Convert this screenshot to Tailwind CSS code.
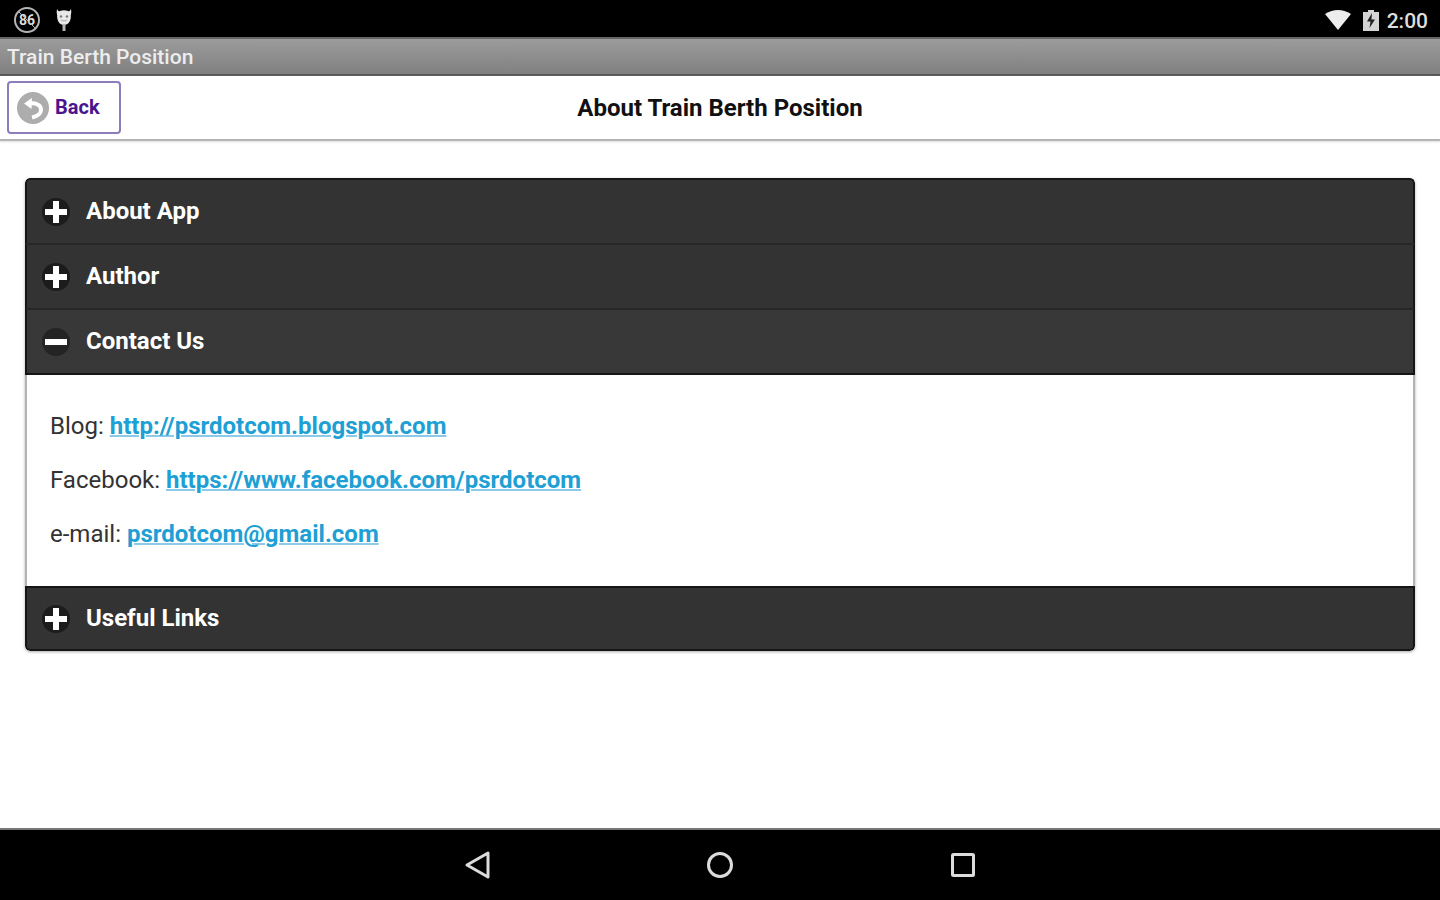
<!DOCTYPE html>
<html lang="en">

<head>
  <meta charset="utf-8">
  <meta name="viewport" content="width=device-width, initial-scale=1">
  <title>Train Berth Position</title>
  <script src="https://cdn.jsdelivr.net/npm/@tailwindcss/browser@4"></script>
</head>

<body class="flex flex-col min-h-screen bg-white font-[Roboto,sans-serif] text-black">
  <!-- status bar -->
  <div class="flex items-center justify-between h-[37px] shrink-0 bg-black px-3 text-[#dedede]">
    <div class="flex items-center gap-3 pt-1">
      <svg class="w-[30px] h-[30px]" viewBox="0 0 30 30">
        <circle cx="15" cy="14" r="12" fill="none" stroke="#b4b4b4" stroke-width="2" />
        <text x="15" y="19" text-anchor="middle" font-size="14" font-weight="700" fill="#dcdcdc">86</text>
        <path d="M7 6l16 16" stroke="#b4b4b4" stroke-width="1" />
      </svg>
      <svg class="w-5 h-[26px]" viewBox="0 0 20 26">
        <path d="M3 1c1 2 2 2.500 3 2q4-1.500 8 0c1 .5 2 0 3-2c.5 3 .2 4-.2 6c.5 6-2.500 10-6.800 10S2.700 13 3.200 7C2.800 5 2.500 4 3 1z" fill="#e8e8e8" />
        <path d="M10 16v7" stroke="#b4b4b4" stroke-width="3" />
        <circle cx="7" cy="8.500" r="1.200" fill="#777" />
        <circle cx="13" cy="8.500" r="1.200" fill="#777" />
        <path d="M7 12q3 2 6 0" stroke="#aaa" fill="none" />
      </svg>
    </div>
    <div class="flex items-center pt-1">
      <svg class="w-[26px] h-[22px] mr-3" viewBox="0 0 26 22" fill="#ededed">
        <path d="M0 4Q13-4 26 4L13 20z" />
      </svg>
      <svg class="w-4 h-[22px] mr-2" viewBox="0 0 16 22">
        <path d="M0 2h5V0h6v2h5v19H0z" fill="#d4d4d4" />
        <path d="M9 3L4 11.500h3.500L6.500 18L12 9.500H8.500z" fill="#222" />
      </svg>
      <span class="text-[21px] leading-6 font-medium">2:00</span>
    </div>
  </div>

  <!-- window title -->
  <div class="flex items-center h-[39px] shrink-0 px-[7px] border-t-2 border-b-2 border-t-[#666] border-b-[#555] bg-linear-to-b from-[#9c9c9c] to-[#808080]">
    <span class="text-[21px] leading-6 font-medium text-[#ededed]">Train Berth Position</span>
  </div>

  <!-- page header -->
  <header class="grid grid-cols-[1fr_auto_1fr] items-center h-[65px] shrink-0 px-[7px] border-b-2 border-[#b4b4b4] shadow-[0_1px_2px_#ddd]">
    <a href="#" class="flex items-center gap-[6px] justify-self-start w-[114px] h-[53px] pl-2 rounded-[4px] border-2 border-[#8d7dbd] bg-white">
      <svg class="w-8 h-8" viewBox="0 0 32 32">
        <circle cx="16" cy="16" r="16" fill="#adadad" />
        <path d="M7 11.500L15 6L14.500 17z" fill="#fff" />
        <path d="M12 11.500C19 10.500 24 13 24 17.500C24 21.500 20 24.500 15 25.500" fill="none" stroke="#fff" stroke-width="4" />
      </svg>
      <span class="pb-[2px] text-xl leading-6 font-bold text-[#4b1590]">Back</span>
    </a>
    <h1 class="text-2xl leading-7 font-bold text-[#111]">About Train Berth Position</h1>
  </header>

  <!-- accordion -->
  <main class="grow px-[25px] pt-[37px]">
    <div class="rounded-[5px] overflow-hidden shadow-[0_1px_3px_#aaa]">
      <h2>
        <button type="button" class="flex items-center gap-4 w-full h-[65px] pl-[15px] rounded-t-[5px] border-2 border-b-0 border-[#161616] bg-[#333] text-white">
          <svg class="w-7 h-7" viewBox="0 0 28 28">
            <circle cx="14" cy="14" r="14" fill="#1c1c1c" />
            <path d="M3 14h22M14 3v22" stroke="#fff" stroke-width="6" />
          </svg>
          <span class="pb-[2px] text-2xl leading-7 font-bold">About App</span>
        </button>
      </h2>
      <h2>
        <button type="button" class="flex items-center gap-4 w-full h-[65px] pl-[15px] border-2 border-b-0 border-x-[#161616] border-t-[#272727] bg-[#333] text-white">
          <svg class="w-7 h-7" viewBox="0 0 28 28">
            <circle cx="14" cy="14" r="14" fill="#1c1c1c" />
            <path d="M3 14h22M14 3v22" stroke="#fff" stroke-width="6" />
          </svg>
          <span class="pb-[2px] text-2xl leading-7 font-bold">Author</span>
        </button>
      </h2>
      <h2>
        <button type="button" aria-expanded="true" class="flex items-center gap-4 w-full h-[67px] pl-[15px] border-2 border-x-[#161616] border-t-[#272727] border-b-[#161616] bg-[#383838] text-white">
          <svg class="w-7 h-7" viewBox="0 0 28 28">
            <circle cx="14" cy="14" r="14" fill="#242424" />
            <path d="M3 14h22" stroke="#fff" stroke-width="6" />
          </svg>
          <span class="pb-[2px] text-2xl leading-7 font-bold">Contact Us</span>
        </button>
      </h2>
      <div class="flex flex-col gap-[26px] px-[23px] pt-[37px] pb-[38px] border-x-2 border-[#b4b4b4] bg-white text-2xl leading-7 text-[#333]">
        <p>Blog: <a href="#" class="font-bold text-[#209fd4] underline decoration-[#8dc9e8] decoration-2">http://psrdotcom.blogspot.com</a></p>
        <p>Facebook: <a href="#" class="font-bold text-[#209fd4] underline decoration-[#8dc9e8] decoration-2">https://www.facebook.com/psrdotcom</a></p>
        <p>e-mail: <a href="#" class="font-bold text-[#209fd4] underline decoration-[#8dc9e8] decoration-2">psrdotcom@gmail.com</a></p>
      </div>
      <h2>
        <button type="button" class="flex items-center gap-4 w-full h-[65px] pl-[15px] rounded-b-[5px] border-2 border-[#161616] bg-[#333] text-white">
          <svg class="w-7 h-7" viewBox="0 0 28 28">
            <circle cx="14" cy="14" r="14" fill="#1c1c1c" />
            <path d="M3 14h22M14 3v22" stroke="#fff" stroke-width="6" />
          </svg>
          <span class="pb-[2px] text-2xl leading-7 font-bold">Useful Links</span>
        </button>
      </h2>
    </div>
  </main>

  <!-- system navigation -->
  <nav class="flex justify-center items-center gap-[213px] h-[72px] shrink-0 border-t-2 border-[#777] bg-black">
    <button type="button" aria-label="Back">
      <svg class="w-[30px] h-[30px]" viewBox="0 0 30 30" fill="none" stroke="#dcdcdc" stroke-width="3" stroke-linejoin="round">
        <path d="M5 15L26 3V27z" />
      </svg>
    </button>
    <button type="button" aria-label="Home">
      <svg class="w-[30px] h-[30px]" viewBox="0 0 30 30" fill="none" stroke="#dcdcdc" stroke-width="3">
        <circle cx="15" cy="15" r="11.500" />
      </svg>
    </button>
    <button type="button" aria-label="Recent apps">
      <svg class="w-[30px] h-[30px]" viewBox="0 0 30 30" fill="none" stroke="#dcdcdc" stroke-width="3">
        <rect x="4.500" y="4.500" width="21" height="21" rx="1" />
      </svg>
    </button>
  </nav>
</body>

</html>
